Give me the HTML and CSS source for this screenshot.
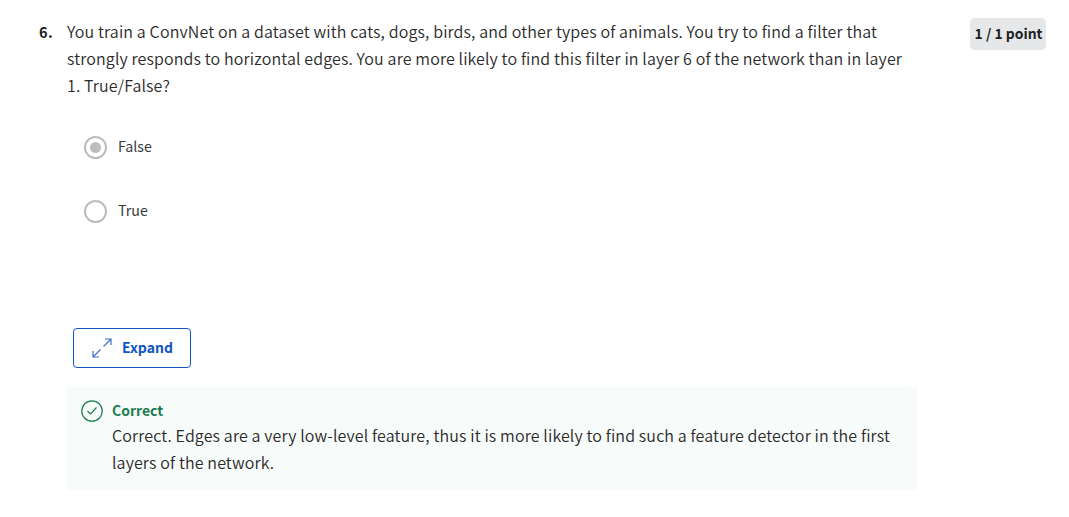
FILE: index.html
```html
<!DOCTYPE html>
<html lang="en">
<head>
<meta charset="utf-8">
<title>Quiz question</title>
<link rel="stylesheet" href="styles.css">
</head>
<body>
<main class="question">
  <div class="number">6.</div>
  <div class="content">
    <div class="prompt">
      <span class="line">You train a ConvNet on a dataset with cats, dogs, birds, and other types of animals. You try to find a filter that</span>
      <span class="line">strongly responds to horizontal edges. You are more likely to find this filter in layer 6 of the network than in layer</span>
      <span class="line">1. True/False?</span>
    </div>
    <div class="options">
      <div class="option"><span class="radio checked"></span><span class="label">False</span></div>
      <div class="option"><span class="radio"></span><span class="label">True</span></div>
    </div>
    <button class="expand" type="button">
      <svg class="expand-icon" width="20" height="20" viewBox="0 0 20 20"><path d="M11.500 8.500 19 1M13 1h6v6M8.500 11.500 1 19M1 13v6h6"/></svg>
      <span class="label">Expand</span>
    </button>
    <section class="feedback">
      <svg class="check-icon" width="22" height="22" viewBox="0 0 22 22"><circle cx="11" cy="11" r="10.200"/><path d="m6.500 11 3 3 6-6.500"/></svg>
      <div class="feedback-body">
        <div class="feedback-title">Correct</div>
        <span class="line">Correct. Edges are a very low-level feature, thus it is more likely to find such a feature detector in the first</span>
        <span class="line">layers of the network.</span>
      </div>
    </section>
  </div>
  <div class="points">1 / 1 point</div>
</main>
</body>
</html>
```
FILE: styles.css
```css
* { box-sizing: border-box; }
body {
  margin: 0;
  background: #fff;
  color: #1f1f1f;
  font-family: "Noto Sans CJK SC", "Noto Sans", sans-serif;
  font-size: 16px;
  line-height: 27px;
}
.question {
  display: flex;
  align-items: flex-start;
  padding: 18px 23px 0 39px;
}
.number {
  width: 28px;
  flex: none;
  font-size: 14.500px;
  font-weight: 700;
  letter-spacing: 0.5px;
}
.content { width: 850px; flex: none; }
.line {
  display: block;
  width: max-content;
  color: #2a2a2a;
  font-weight: 350;
  letter-spacing: 0.133px;
}
.options {
  display: flex;
  flex-direction: column;
  gap: 42px;
  padding: 37px 0 0 17px;
}
.option {
  display: flex;
  align-items: center;
  gap: 11px;
  height: 22px;
  color: #373a3c;
  font-size: 14.200px;
}
.label { padding-bottom: 2px; }
.radio {
  display: grid;
  place-items: center;
  width: 23px;
  height: 23px;
  border: 2px solid #bdbdbd;
  border-radius: 50%;
}
.checked::after {
  content: "";
  width: 11px;
  height: 11px;
  border-radius: 50%;
  background: #bdbdbd;
}
.expand {
  display: flex;
  align-items: center;
  gap: 10px;
  width: 118px;
  height: 40px;
  margin: 106px 0 0 6px;
  padding: 0 0 0 18px;
  border: 1px solid #0f56c4;
  border-radius: 4px;
  background: #fff;
  color: #0f56c4;
  font-family: inherit;
  font-size: 14px;
  font-weight: 700;
}
.expand-icon { fill: none; stroke: #3f6fc9; stroke-width: 1.2; }
.feedback {
  display: flex;
  gap: 9px;
  height: 103px;
  margin-top: 19px;
  padding: 12px 13px 12px 14px;
  background: #f7fbf9;
}
.check-icon { fill: none; stroke: #1d7c50; stroke-width: 1.2; flex: none; margin-top: 1px; }
.feedback-title {
  height: 23px;
  line-height: 22px;
  color: #1d7c50;
  font-size: 14px;
  font-weight: 700;
}
.points {
  width: 76px;
  height: 32px;
  margin-left: auto;
  padding-left: 1px;
  border-radius: 5px;
  background: #e5e7e8;
  font-size: 13.900px;
  font-weight: 700;
  line-height: 30px;
  text-align: center;
  white-space: nowrap;
}
```
